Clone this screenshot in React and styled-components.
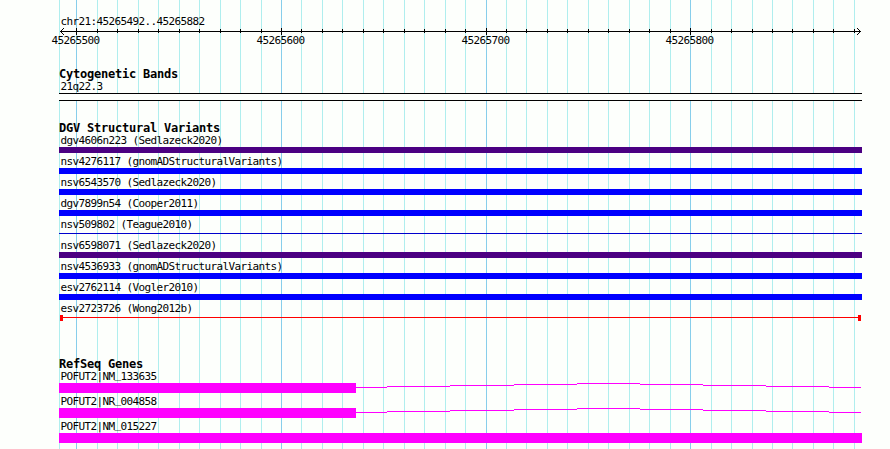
import React from 'react'
import styled, { createGlobalStyle } from 'styled-components'

const START = 59
const WIDTH = 803

const gridLines = [
  59, 76, 97, 117, 138, 158, 179, 199, 220, 240, 261, 281, 301, 322,
  342, 363, 383, 404, 424, 445, 465, 486, 506, 526, 547, 567, 588,
  608, 629, 649, 670, 690, 711, 731, 752, 772, 792, 813, 833, 854,
]
const majors = [76, 281, 486, 690]

const variants = [
  { name: 'dgv4606n223 (Sedlazeck2020)', color: '#4b0082', kind: 'bar' },
  { name: 'nsv4276117 (gnomADStructuralVariants)', color: '#0000ff', kind: 'bar' },
  { name: 'nsv6543570 (Sedlazeck2020)', color: '#0000ff', kind: 'bar' },
  { name: 'dgv7899n54 (Cooper2011)', color: '#0000ff', kind: 'bar' },
  { name: 'nsv509802 (Teague2010)', color: '#0000cd', kind: 'line' },
  { name: 'nsv6598071 (Sedlazeck2020)', color: '#4b0082', kind: 'bar' },
  { name: 'nsv4536933 (gnomADStructuralVariants)', color: '#0000ff', kind: 'bar' },
  { name: 'esv2762114 (Vogler2010)', color: '#0000ff', kind: 'bar' },
  { name: 'esv2723726 (Wong2012b)', color: '#ff0000', kind: 'ends' },
]

const genes = [
  { name: 'POFUT2|NM', id: '133635', exon: 297 },
  { name: 'POFUT2|NR', id: '004858', exon: 297 },
  { name: 'POFUT2|NM', id: '015227', exon: WIDTH },
]

// the intron is a shallow arc, stepped one pixel at a time: [x, width, y]
const intron = [
  [0, 31, 4], [31, 63, 3], [94, 64, 2], [158, 63, 1], [221, 63, 0],
  [284, 63, 1], [347, 63, 2], [410, 63, 3], [473, 32, 4],
]

function Grid() {
  return (
    <StGrid width="890" height="449" shapeRendering="crispEdges">
      {gridLines.map((x) => (
        <rect key={x} x={x} y="0" width="1" height="449"
          fill={majors.includes(x) ? '#87ceeb' : '#afeeee'} />
      ))}
    </StGrid>
  )
}

function Ruler() {
  return (
    <StRuler>
      <StLabel>chr21:45265492..45265882</StLabel>
      <StAxis width={WIDTH} height="8" shapeRendering="crispEdges">
        <rect x="1" y="4" width="801" height="1" />
        {gridLines.slice(1).map((x) => {
          const major = majors.includes(x)
          return <rect key={x} x={x - START} y={major ? 1 : 2} width="1" height={major ? 7 : 4} />
        })}
        {[1, 2, 3].map((n) => (
          <React.Fragment key={n}>
            <rect x={1 + n} y={4 - n} width="1" height="1" />
            <rect x={1 + n} y={4 + n} width="1" height="1" />
            <rect x={801 - n} y={4 - n} width="1" height="1" />
            <rect x={801 - n} y={4 + n} width="1" height="1" />
          </React.Fragment>
        ))}
      </StAxis>
      <StNumbers>
        {['45265500', '45265600', '45265700', '45265800'].map((n) => (
          <StLabel key={n}>{n}</StLabel>
        ))}
      </StNumbers>
    </StRuler>
  )
}

function App() {
  return (
    <StPage>
      <GlobalStyle />
      <Grid />
      <StContent>
        <Ruler />

        <StTrack $gap={22}>
          <StTitle>Cytogenetic Bands</StTitle>
          <StLabel>21q22.3</StLabel>
          <StBand />
        </StTrack>

        <StTrack $gap={21}>
          <StTitle>DGV Structural Variants</StTitle>
          {variants.map((v) => (
            <StVariant key={v.name}>
              <StLabel>{v.name}</StLabel>
              <StGlyph $color={v.color} $kind={v.kind} />
            </StVariant>
          ))}
        </StTrack>

        <StTrack $gap={35}>
          <StTitle>RefSeq Genes</StTitle>
          {genes.map((g) => (
            <StGene key={g.id}>
              <StLabel>{g.name}<StUnderscore>_</StUnderscore>{g.id}</StLabel>
              <StGeneRow>
                <StExon $width={g.exon} />
                {g.exon < WIDTH && (
                  <svg width="506" height="10" shapeRendering="crispEdges">
                    {intron.map(([x, w, y]) => (
                      <rect key={x} x={x} y={y} width={w} height="1" fill="#ff00ff" />
                    ))}
                  </svg>
                )}
              </StGeneRow>
            </StGene>
          ))}
        </StTrack>
      </StContent>
    </StPage>
  )
}

const GlobalStyle = createGlobalStyle`
  body {
    margin: 0;
    background: #fdfffc;
    overflow: hidden;
  }
`

const StPage = styled.div`
  position: relative;
  width: 890px;
  height: 449px;
  overflow: hidden;
  color: #000;
  background: #fdfffc;
`

/* the grid runs behind every track */
const StGrid = styled.svg`
  position: absolute;
  top: 0;
  left: 0;
`

const StContent = styled.div`
  position: relative;
  display: flex;
  flex-direction: column;
  width: ${WIDTH}px;
  padding: 15px 0 0 ${START}px;
`

const StLabel = styled.div`
  height: 12px;
  padding-left: 1.4px;
  font: 11px/14px "DejaVu Sans Mono", monospace;
  letter-spacing: -0.622px;
  white-space: pre;
`

/* keeps the underscore clear of the exon below */
const StUnderscore = styled.span`
  line-height: 0;
  vertical-align: 2px;
`

const StTitle = styled.div`
  height: 12px;
  font: bold 12px/12px "DejaVu Sans Mono", monospace;
  letter-spacing: -0.224px;
  white-space: pre;
`

const StRuler = styled.div`
  display: flex;
  flex-direction: column;
`

const StAxis = styled.svg`
  display: block;
`

const StNumbers = styled.div`
  display: grid;
  grid-template-columns: 205px 205px 204px 60px;
  margin: -1px 0 0 -9px;
`

const StTrack = styled.section`
  display: flex;
  flex-direction: column;
  margin-top: ${(p) => p.$gap}px;
`

const StBand = styled.div`
  height: 6px;
  margin-top: 1px;
  border: solid #000;
  border-width: 1px 0;
  background: #fdfffc;
`

const StVariant = styled.div`
  height: 21px;
`

const StGlyph = styled.div`
  box-sizing: border-box;
  height: 6px;
  margin: 1px ${(p) => (p.$kind === 'ends' ? 1 : 0)}px 0;
  border: 0 solid ${(p) => p.$color};
  border-width: ${(p) => (p.$kind === 'ends' ? '0 3px' : '0')};
  background: ${(p) => p.$kind === 'bar'
    ? p.$color
    : `linear-gradient(${p.$color}, ${p.$color}) 0 2px / 100% 1px no-repeat`};
`

const StGene = styled.div`
  height: 25px;
`

const StGeneRow = styled.div`
  display: flex;
  height: 10px;
  margin-top: 1px;
`

const StExon = styled.div`
  width: ${(p) => p.$width}px;
  height: 10px;
  background: #ff00ff;
`

export default App
